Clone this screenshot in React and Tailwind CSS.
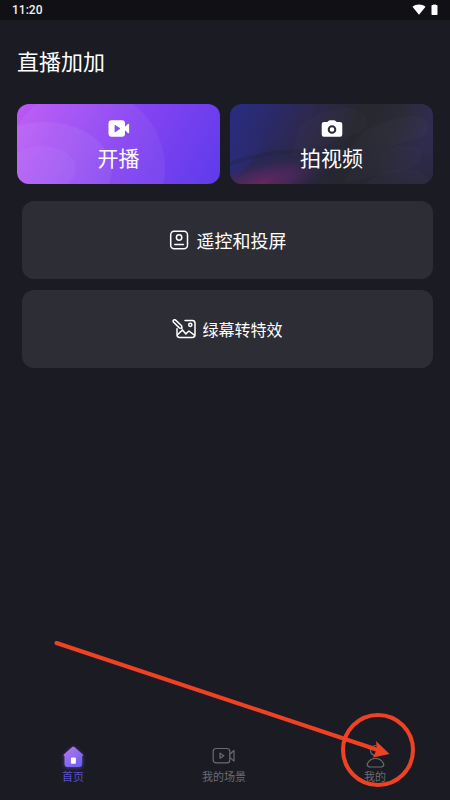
import React from "react";

function StatusBar() {
  return (
    <header className="flex h-5 items-center justify-between bg-[#111115] px-3">
      <span className="font-[Roboto,sans-serif] text-[12px] font-medium leading-5 text-[#f0f0f0]">11:20</span>
      <span className="flex items-center gap-[5px]">
        <svg width="14" height="12" viewBox="0 0 14 12" fill="#fff" aria-hidden="true">
          <path d="M.5 2.700C2.300 1.200 4.600.5 7 .5s4.700.7 6.500 2.200L7 10.800z" />
        </svg>
        <svg width="7" height="12" viewBox="0 0 7 12" aria-hidden="true">
          <path d="M2 0h3v2H2z" fill="#777" />
          <rect x=".5" y="1" width="6" height="10" rx=".8" fill="#fff" />
        </svg>
      </span>
    </header>
  );
}

function LiveCard() {
  return (
    <button className="relative h-20 flex-1 overflow-hidden rounded-xl bg-linear-[118deg] from-[#bd58f5] via-[#8744f3] via-50% to-[#5e3bea] text-white">
      <svg className="absolute inset-0 h-full w-full" viewBox="0 0 203 80" preserveAspectRatio="none" aria-hidden="true">
        <g fill="#fff">
          <circle cx="68" cy="64" r="80" fillOpacity=".05" />
          <ellipse cx="27" cy="66" rx="68" ry="48" fillOpacity=".06" />
          <ellipse cx="25" cy="65" rx="34" ry="23" fillOpacity=".04" />
        </g>
      </svg>
      <span className="relative flex h-full flex-col items-center pt-4">
        <svg width="22" height="17" viewBox="0 0 22 17" aria-hidden="true">
          <rect x=".5" y=".3" width="16.500" height="16.400" rx="3" fill="#fff" />
          <path d="M16.500 7.200l3.400-3.200q1.200-.8 1.200.6v7.800q0 1.400-1.200.6l-3.400-3.200z" fill="#fff" />
          <path d="M7 5.200l5 3.300-5 3.400z" fill="#8a4df2" stroke="#8a4df2" strokeWidth=".8" strokeLinejoin="round" />
        </svg>
        <span className="mt-1 text-[21px] leading-8">开播</span>
      </span>
    </button>
  );
}

function VideoCard() {
  return (
    <button className="relative h-20 flex-1 overflow-hidden rounded-xl bg-[#292932] text-white">
      <svg className="absolute inset-0 h-full w-full" viewBox="0 0 203 80" preserveAspectRatio="none" aria-hidden="true">
        <defs>
          <linearGradient id="base" x1="0" y1="0" x2="1" y2="0.150">
            <stop offset="0" stopColor="#282d82" />
            <stop offset=".2" stopColor="#2a2a6c" />
            <stop offset=".42" stopColor="#2d284b" />
            <stop offset=".65" stopColor="#27272f" />
            <stop offset=".85" stopColor="#2b2b38" />
            <stop offset="1" stopColor="#302c50" />
          </linearGradient>
          <radialGradient id="rose" cx="0" cy="0" r="1" gradientUnits="userSpaceOnUse" gradientTransform="translate(30 79) rotate(-14) scale(72 22)">
            <stop offset="0" stopColor="#64285f" />
            <stop offset=".5" stopColor="#4d2862" stopOpacity=".75" />
            <stop offset="1" stopColor="#302851" stopOpacity="0" />
          </radialGradient>
          <linearGradient id="shade" x1="0" y1="0" x2="0" y2="1">
            <stop offset=".4" stopColor="#24243a" stopOpacity="0" />
            <stop offset="1" stopColor="#25252f" stopOpacity=".65" />
          </linearGradient>
        </defs>
        <path d="M0 0h203v80H0z" fill="url(#base)" />
        <path d="M75 0h128v80H0z" fill="url(#shade)" />
        <path d="M0 61C20 53 42 49 76 48C98 48 110 55 116 80H0z" fill="url(#rose)" />
        <path d="M0 60C20 52 42 48 76 47" fill="none" stroke="#222039" strokeWidth="4" opacity=".3" />
        <g fill="#fff" fillOpacity=".015">
          <path d="M70 22C92 3 125-2 136 12C142 30 118 31 95 41L62 52z" />
          <path d="M132 28C155 16 185 6 196 16C203 30 193 35 175 38L112 58z" />
          <path d="M128 54C153 43 181 36 190 46C195 57 185 65 164 68L112 80z" />
          <path d="M135 80C150 65 183 60 194 69L203 80z" />
        </g>
      </svg>
      <span className="relative flex h-full flex-col items-center pt-4">
        <svg width="22" height="17" viewBox="0 0 22 17" aria-hidden="true">
          <path d="M3 2h3.200L7.700.8Q8.200.3 9 .3h4q.8 0 1.300.5L15.800 2H19q2.300 0 2.300 2.300V14.500q0 2.300-2.300 2.300H3Q.7 16.800.7 14.500V4.300Q.7 2 3 2z" fill="#fff" />
          <circle cx="11" cy="9.500" r="3.300" fill="#fff" stroke="#29293b" strokeWidth="2" />
        </svg>
        <span className="mt-1 text-[21px] leading-8">拍视频</span>
      </span>
    </button>
  );
}

function RemoteIcon() {
  return (
    <svg width="20" height="20" viewBox="0 0 20 20" fill="none" stroke="#fff" strokeWidth="1.500" strokeLinecap="round" aria-hidden="true">
      <rect x="1.700" y="1.200" width="16.800" height="17.600" rx="3.500" />
      <circle cx="10.100" cy="7.500" r="2.700" />
      <path d="M5.800 14.500h8.600" />
    </svg>
  );
}

function GreenScreenIcon() {
  return (
    <svg width="24" height="20" viewBox="0 0 24 20" fill="none" stroke="#fff" strokeWidth="1.500" strokeLinecap="round" strokeLinejoin="round" aria-hidden="true">
      <path d="M13 1.500h7.300q2.700 0 2.700 2.700v11.600q0 2.700-2.700 2.700H7.700q-2.700 0-2.700-2.700v-6" />
      <path d="M1.600 1.100q1-.9 2 0l6 5.600.4 2.500-2.700-.3-5.700-5.600q-1-1.100 0-2.200z" />
      <circle cx="18.300" cy="5.800" r="1.600" />
      <path d="M5.500 15.800l5-4.900 3.400 4 3-2.900 5.500 4.100" />
    </svg>
  );
}

function Feature({ icon, children, textClass }) {
  return (
    <button className={"flex h-[78px] w-full items-center justify-center rounded-xl bg-[#2d2d35] text-white " + textClass}>
      {icon}
      {children}
    </button>
  );
}

function NavItem({ icon, label, active }) {
  return (
    <a
      href="#"
      aria-current={active ? "page" : undefined}
      className={"flex flex-col items-center text-[11px] leading-4 " + (active ? "text-[#5d50c9]" : "text-[#6b6b6e]")}
    >
      {icon}
      {label}
    </a>
  );
}

function HomeIcon() {
  return (
    <svg width="24" height="24" viewBox="0 0 24 24" className="drop-shadow-[0_1px_2px_#4b3c8e]" aria-hidden="true">
      <defs>
        <linearGradient id="home" x1="0" y1="0" x2=".8" y2="1">
          <stop offset="0" stopColor="#bd78ee" />
          <stop offset="1" stopColor="#6762ee" />
        </linearGradient>
      </defs>
      <path d="M11.200 3q1.100-1 2.200 0l8.500 7.400q.9 1.400-.7 1.600v8q0 3-3 3H6.500q-3 0-3-3v-8q-1.600-.2-.7-1.600z" fill="url(#home)" />
      <rect x="9.900" y="13.500" width="5" height="6.200" rx="1" fill="#fff" />
    </svg>
  );
}

function SceneIcon() {
  return (
    <svg width="24" height="24" viewBox="0 0 24 24" fill="none" stroke="#6b6b6e" strokeWidth="1.200" strokeLinejoin="round" aria-hidden="true">
      <rect x="1.200" y="4.500" width="16.600" height="14.400" rx="3" />
      <path d="M17.800 10.200l4.200-3.700v10.600l-4.200-3.700M8 9.200v5l3.800-2.500z" />
    </svg>
  );
}

function UserIcon() {
  return (
    <svg width="24" height="24" viewBox="0 0 24 24" fill="none" stroke="#6b6b6e" strokeWidth="1.200" strokeLinejoin="round" aria-hidden="true">
      <circle cx="12.500" cy="6.500" r="5" />
      <path d="M6.500 23Q3.500 22 4.500 19.500Q7 14.500 12.500 14.500T20.500 19.500Q21.500 22 18.500 23z" />
    </svg>
  );
}

function Pointer() {
  return (
    <svg className="pointer-events-none absolute bottom-0 right-0" width="450" height="200" viewBox="0 0 450 200" fill="none" aria-hidden="true">
      <circle cx="378" cy="150" r="35" stroke="#ef4225" strokeWidth="4" />
      <path d="M56.500 43L378 150" stroke="#ef4225" strokeWidth="4" strokeLinecap="round" />
      <path d="M389.500 154L376 141L377 149L373 157.500z" fill="#ef4225" />
    </svg>
  );
}

export default function App() {
  return (
    <div className="relative flex min-h-screen flex-col bg-[#1b1b24] font-['Noto_Sans_CJK_SC',sans-serif]">
      <StatusBar />
      <main className="flex-1 px-[17px] pt-6">
        <h1 className="text-[22px] leading-8 text-white">直播加加</h1>
        <div className="mt-7 flex gap-[10px]">
          <LiveCard />
          <VideoCard />
        </div>
        <div className="mt-[17px] flex flex-col gap-[11px] pl-[5px]">
          <Feature icon={<RemoteIcon />} textClass="gap-2 text-[18px]">遥控和投屏</Feature>
          <Feature icon={<GreenScreenIcon />} textClass="gap-[6px] text-[16px]">绿幕转特效</Feature>
        </div>
      </main>
      <nav className="flex justify-between pb-4 pl-[61px] pr-[63px]">
        <NavItem icon={<HomeIcon />} label="首页" active />
        <NavItem icon={<SceneIcon />} label="我的场景" />
        <NavItem icon={<UserIcon />} label="我的" />
      </nav>
      <Pointer />
    </div>
  );
}
